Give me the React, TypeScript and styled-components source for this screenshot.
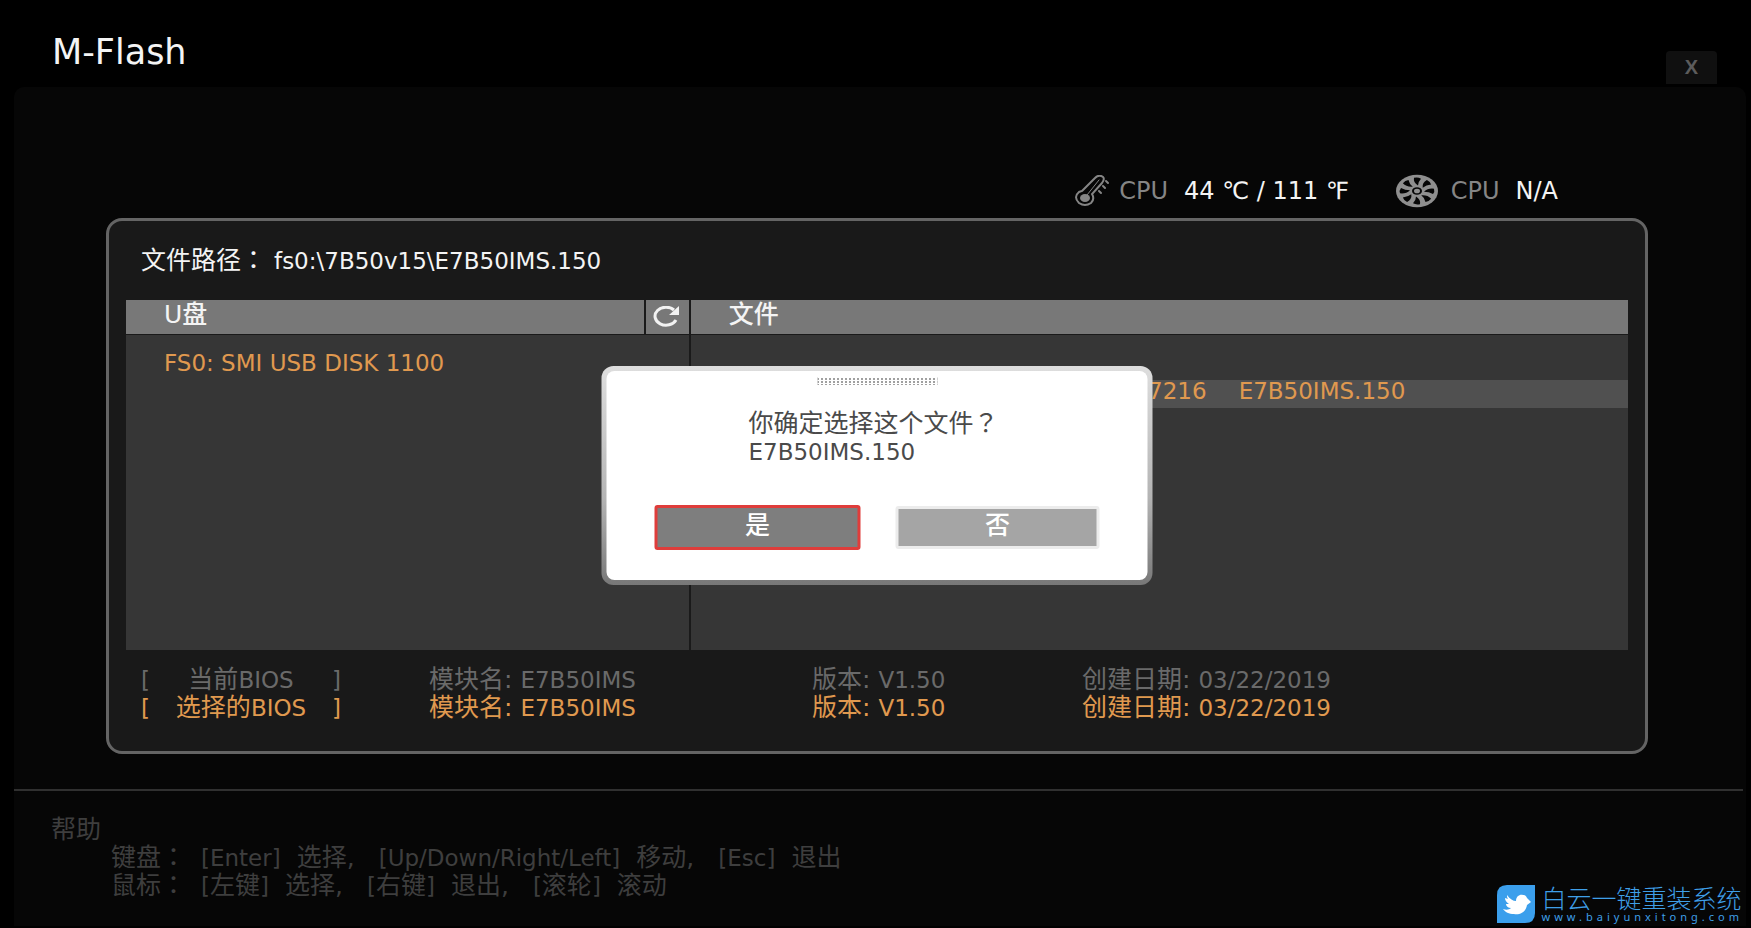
import React from 'react';
import styled, { createGlobalStyle, css } from 'styled-components';

const latin = `"DejaVu Sans", "Noto Sans CJK SC", sans-serif`;

const color = {
  text: '#f4f4f4',
  dim: '#6a6a6a',
  label: '#858585',
  accent: '#e0994f',
  help: '#3e3e3e',
  brand: '#3f9fe8',
};

const GlobalStyle = createGlobalStyle`
  *, *::before, *::after { box-sizing: border-box; }
  html, body, #root { min-height: 100vh; }
  body { margin: 0; background: #000; color: ${color.text}; font: 23px/28px ${latin}; }
  #root { display: flex; }
  button { font: inherit; color: inherit; padding: 0; border: 0; background: none; cursor: pointer; }
  h1, h2, p, ul { margin: 0; padding: 0; font-weight: 400; }
  ul { list-style: none; }
`;

const Page = styled.div`
  flex: 1;
  display: flex;
  flex-direction: column;
  min-width: 0;
  padding: 0 5px 2px 14px;
`;

const TopBar = styled.header`
  display: flex;
  justify-content: space-between;
  align-items: flex-end;
  height: 87px;
  padding: 0 29px 3px 38px;
`;

const Title = styled.h1`
  font-size: 35px;
  line-height: 40px;
  padding-bottom: 12px;
`;

const CloseButton = styled.button`
  width: 51px;
  height: 33px;
  border-radius: 4px 4px 0 0;
  background: #101010;
  color: #5c5c5c;
  font: bold 20px/33px "Liberation Sans", sans-serif;
`;

const Shell = styled.div`
  flex: 1;
  display: flex;
  flex-direction: column;
  background: #060606;
  border-radius: 10px 10px 0 0;
`;

const StatusBar = styled.div`
  display: flex;
  justify-content: flex-end;
  align-items: center;
  gap: 46px;
  height: 131px;
  padding: 77px 188px 0 0;
`;

const Sensor = styled.div`
  display: flex;
  align-items: center;
  gap: 8px;
  font-size: 24px;
`;

const SensorName = styled.span`
  color: ${color.label};
  margin-right: 8px;
`;

const Frame = styled.main`
  position: relative;
  margin: 0 98px 0 92px;
  padding: 20px 17px 29px;
  border: 3px solid #646464;
  border-radius: 16px;
  background: #191919;
`;

const Cjk = styled.span`
  font-size: 25px;
`;

const Mark = styled.span`
  font-family: "Noto Sans CJK TC", sans-serif;
  line-height: 0;
`;

const PathLine = styled.p`
  display: flex;
  gap: 8px;
  height: 59px;
  padding: 6px 15px 0;
`;

const Browser = styled.div`
  display: grid;
  grid-template-columns: minmax(0, 518fr) 43px minmax(0, 938fr);
  column-gap: 2px;
  row-gap: 1px;
  background: #1a1a1a;
`;

const ColumnHead = styled.h2`
  height: 34px;
  padding: 1px 38px 0;
  background: #787878;
  font-size: 25px;
  font-weight: 500;
  line-height: 28px;
`;

const RefreshButton = styled.button`
  display: flex;
  align-items: center;
  justify-content: center;
  height: 34px;
  background: #787878;
`;

const Pane = styled.ul<{ $span?: number }>`
  grid-column: span ${(p) => p.$span ?? 1};
  min-height: 315px;
  padding-top: 17px;
  background: #363636;
`;

const Entry = styled.button<{ $selected?: boolean }>`
  display: flex;
  gap: 32px;
  width: 100%;
  height: 28px;
  padding: 0 38px 6px;
  line-height: 22px;
  text-align: left;
  color: ${color.accent};
  ${(p) => p.$selected && css`background: #505050;`}
`;

const FileSize = styled.span`
  width: 478px;
  text-align: right;
`;

const Builds = styled.div`
  padding: 16px 15px 0;
`;

const Build = styled.div<{ $active?: boolean }>`
  display: grid;
  grid-template-columns: 288fr 383fr 270fr 531fr;
  color: ${(p) => (p.$active ? color.accent : color.dim)};
`;

const BuildName = styled.span`
  display: flex;
  justify-content: space-between;
  width: 200px;
`;

const Field = styled.span`
  display: flex;
  gap: 8px;
`;

const Modal = styled.section`
  position: absolute;
  top: 145px;
  left: 50%;
  transform: translateX(-50%);
  width: 551px;
  padding: 5px;
  border-radius: 12px;
  background: linear-gradient(#dedede, #b4b4b4 60%, #787878);
`;

const ModalBody = styled.div`
  height: 209px;
  padding: 6px 48px 0;
  border-radius: 8px;
  background: #fff;
  color: #4a4a4a;
`;

const Grip = styled.div`
  width: 120px;
  height: 8px;
  margin: 0 auto;
  background: repeating-linear-gradient(#fff 0 1px, transparent 1px 3px),
    repeating-linear-gradient(90deg, #a0a0a0 0 2px, #fff 2px 4px);
`;

const Message = styled.p`
  display: grid;
  grid-auto-rows: 28px;
  padding: 25px 0 39px 94px;
`;

const Choices = styled.div`
  display: flex;
  justify-content: space-between;
  align-items: center;
`;

const Choice = styled.button<{ $focused?: boolean }>`
  width: ${(p) => (p.$focused ? 206 : 204)}px;
  height: ${(p) => (p.$focused ? 45 : 43)}px;
  padding-bottom: 4px;
  border: 3px solid ${(p) => (p.$focused ? '#df3d3b' : '#ececec')};
  border-radius: 3px;
  background: ${(p) => (p.$focused ? '#7e7e7e' : '#a5a5a5')};
  color: #fff;
  font-size: 25px;
  font-weight: 500;
  line-height: 30px;
`;

const Footer = styled.footer`
  flex: 1;
  display: flex;
  flex-wrap: wrap;
  justify-content: space-between;
  margin: 35px 3px 0 0;
  padding: 25px 0 0 37px;
  border-top: 2px solid #303030;
  color: ${color.help};
`;

const Help = styled.section`
  display: grid;
  grid-auto-rows: 28px;
  align-content: start;
`;

const HelpLine = styled.div`
  display: flex;
  align-items: baseline;
  gap: 24px;
  padding-left: 60px;
`;

const HelpKey = styled.span`
  width: 66px;
  font-size: 25px;
  white-space: nowrap;
`;

const Hint = styled.span`
  display: flex;
  align-items: baseline;
  gap: 16px;
`;

const Brand = styled.a`
  display: flex;
  align-items: center;
  align-self: flex-end;
  gap: 7px;
  color: ${color.brand};
  text-decoration: none;
  padding-bottom: 3px;
`;

const BrandText = styled.span`
  display: flex;
  flex-direction: column;
`;

const BrandName = styled.span`
  font: 300 25px/25px "Noto Sans CJK SC", sans-serif;
`;

const BrandUrl = styled.span`
  font: 11px/13px "Noto Sans", sans-serif;
  letter-spacing: 4px;
`;

const Thermometer = () => (
  <svg width="36" height="32" viewBox="0 0 36 32" fill="none" stroke="#858585" strokeLinecap="round" aria-hidden="true">
    <path
      d="M7 16 L20 3 Q24 -1 28 2 Q30 4 27 8 L17 19 Q20 24 16 28 Q10 32 4 28 Q-2 22 4 17 Z"
      strokeWidth="2"
    />
    <ellipse cx="10" cy="23" rx="5" ry="4" fill="#858585" stroke="none" />
    <path d="M12 20 L24 5" strokeWidth="1" />
    <path d="M31 6l2 2M28 11l2 2M24 16l2 2" strokeWidth="2" />
  </svg>
);

const blades = [0, 45, 90, 135, 180, 225, 270, 315];

const Fan = () => (
  <svg width="48" height="34" viewBox="-22 -22 48 44" preserveAspectRatio="none" aria-hidden="true">
    <circle r="21" fill="#8f8f8f" />
    {blades.map((a) => (
      <path key={a} transform={`rotate(${a})`} d="M1 -7 Q-4 -11 -3 -17 Q1 -18 4 -16 Q1 -12 1 -7Z" fill="#060606" />
    ))}
    <circle r="6" fill="#8f8f8f" />
    <circle r="4" fill="none" stroke="#060606" strokeWidth="2" />
  </svg>
);

const Refresh = () => (
  <svg width="28" height="22" viewBox="0 0 28 22" fill="none" aria-hidden="true">
    <path d="M23 14 A11 9 0 1 1 21 4" stroke="#f2f2f2" strokeWidth="3" />
    <path d="M26 0 V9 H16 Z" fill="#f2f2f2" />
  </svg>
);

const Bird = () => (
  <svg width="38" height="38" viewBox="0 0 38 38" aria-hidden="true">
    <path d="M10 0H38V28Q38 38 28 38H0V10Q0 0 10 0Z" fill="#3b9fec" />
    <path
      fill="#fff"
      d="M10 10C13 14 16 16 19 16C19 11 23 9 26 10C28 10 29 11 30 13L34 17L30 20C29 27 23 30 17 29C12 29 8 27 6 24C9 25 12 25 14 23C11 23 9 21 9 19L12 19C9 17 8 15 8 13L11 14C10 13 10 11 10 10Z"
    />
  </svg>
);

const builds = [
  { name: '当前', active: false },
  { name: '选择的', active: true },
];

const hints = [
  {
    device: '键盘',
    items: [
      { key: 'Enter', action: '选择,' },
      { key: 'Up/Down/Right/Left', action: '移动,' },
      { key: 'Esc', action: '退出' },
    ],
  },
  {
    device: '鼠标',
    items: [
      { key: <Cjk>左键</Cjk>, action: '选择,' },
      { key: <Cjk>右键</Cjk>, action: '退出,' },
      { key: <Cjk>滚轮</Cjk>, action: '滚动' },
    ],
  },
];

export default function App() {
  return (
    <>
      <GlobalStyle />
      <Page>
        <TopBar>
          <Title>M-Flash</Title>
          <CloseButton>X</CloseButton>
        </TopBar>
        <Shell>
          <StatusBar>
            <Sensor>
              <Thermometer />
              <SensorName>CPU</SensorName>
              <span>44 ℃ / 111 ℉</span>
            </Sensor>
            <Sensor>
              <Fan />
              <SensorName>CPU</SensorName>
              <span>N/A</span>
            </Sensor>
          </StatusBar>
          <Frame>
            <PathLine>
              <Cjk>文件路径<Mark>：</Mark></Cjk>
              <span>fs0:\7B50v15\E7B50IMS.150</span>
            </PathLine>
            <Browser>
              <ColumnHead>U盘</ColumnHead>
              <RefreshButton aria-label="刷新">
                <Refresh />
              </RefreshButton>
              <ColumnHead>文件</ColumnHead>
              <Pane $span={2}>
                <li>
                  <Entry>FS0: SMI USB DISK 1100</Entry>
                </li>
              </Pane>
              <Pane>
                <li>
                  <Entry />
                </li>
                <li>
                  <Entry $selected>
                    <FileSize>7216</FileSize>
                    <span>E7B50IMS.150</span>
                  </Entry>
                </li>
              </Pane>
            </Browser>
            <Builds>
              {builds.map((b) => (
                <Build key={b.name} $active={b.active}>
                  <BuildName>
                    <span>[</span>
                    <span><Cjk>{b.name}</Cjk>BIOS</span>
                    <span>]</span>
                  </BuildName>
                  <Field><Cjk>模块名:</Cjk>E7B50IMS</Field>
                  <Field><Cjk>版本:</Cjk>V1.50</Field>
                  <Field><Cjk>创建日期:</Cjk>03/22/2019</Field>
                </Build>
              ))}
            </Builds>
            <Modal role="dialog" aria-modal="true">
              <ModalBody>
                <Grip />
                <Message>
                  <Cjk>你确定选择这个文件<Mark>？</Mark></Cjk>
                  <span>E7B50IMS.150</span>
                </Message>
                <Choices>
                  <Choice $focused>是</Choice>
                  <Choice>否</Choice>
                </Choices>
              </ModalBody>
            </Modal>
          </Frame>
          <Footer>
            <Help>
              <Cjk>帮助</Cjk>
              {hints.map((line) => (
                <HelpLine key={line.device}>
                  <HelpKey>{line.device}<Mark>：</Mark></HelpKey>
                  {line.items.map((item, i) => (
                    <Hint key={i}>
                      <span>[{item.key}]</span>
                      <Cjk>{item.action}</Cjk>
                    </Hint>
                  ))}
                </HelpLine>
              ))}
            </Help>
            <Brand href="#">
              <Bird />
              <BrandText>
                <BrandName>白云一键重装系统</BrandName>
                <BrandUrl>www.baiyunxitong.com</BrandUrl>
              </BrandText>
            </Brand>
          </Footer>
        </Shell>
      </Page>
    </>
  );
}
